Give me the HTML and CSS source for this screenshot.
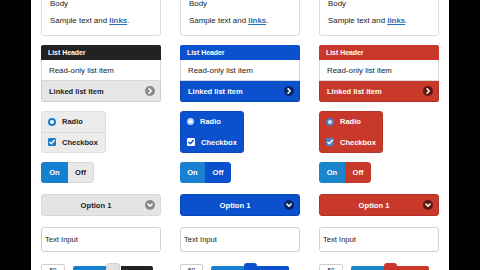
FILE: index.html
```html
<!DOCTYPE html>
<html>
<head>
<meta charset="utf-8">
<link rel="stylesheet" href="styles.css">
</head>
<body>
<div class="screen">
  <div class="col grey">
    <div class="card"><p>Body</p><p>Sample text and <a href="#">links</a>.</p></div>
    <div class="list">
      <div class="list-header">List Header</div>
      <div class="list-item">Read-only list item</div>
      <div class="list-item linked"><span class="grow">Linked list item</span><svg class="circ" viewBox="0 0 10 10" width="10" height="10"><circle cx="5" cy="5" r="5"/><path d="M4.1 2.9 L6.2 5 L4.1 7.1"/></svg></div>
    </div>
    <div class="choices">
      <div class="choice"><span class="radio"></span>Radio</div>
      <div class="choice"><svg class="check" viewBox="0 0 8 8" width="8" height="8"><rect width="8" height="8" rx="1.2"/><path d="M1.8 4.2 L3.4 5.8 L6.3 2.3"/></svg>Checkbox</div>
    </div>
    <div class="toggle"><span class="on">On</span><span class="off">Off</span></div>
    <div class="select"><span class="grow">Option 1</span><svg class="circ" viewBox="0 0 10 10" width="10" height="10"><circle cx="5" cy="5" r="5"/><path d="M2.9 4 L5 6.1 L7.1 4"/></svg></div>
    <div class="input">Text Input</div>
    <div class="slider-row"><div class="num">50</div><div class="slider"><div class="fill"></div><div class="thumb"></div><div class="rest"></div></div></div>
  </div>
  <div class="col blue">
    <div class="card"><p>Body</p><p>Sample text and <a href="#">links</a>.</p></div>
    <div class="list">
      <div class="list-header">List Header</div>
      <div class="list-item">Read-only list item</div>
      <div class="list-item linked"><span class="grow">Linked list item</span><svg class="circ" viewBox="0 0 10 10" width="10" height="10"><circle cx="5" cy="5" r="5"/><path d="M4.1 2.9 L6.2 5 L4.1 7.1"/></svg></div>
    </div>
    <div class="choices">
      <div class="choice"><span class="radio"></span>Radio</div>
      <div class="choice"><svg class="check" viewBox="0 0 8 8" width="8" height="8"><rect width="8" height="8" rx="1.2"/><path d="M1.8 4.2 L3.4 5.8 L6.3 2.3"/></svg>Checkbox</div>
    </div>
    <div class="toggle"><span class="on">On</span><span class="off">Off</span></div>
    <div class="select"><span class="grow">Option 1</span><svg class="circ" viewBox="0 0 10 10" width="10" height="10"><circle cx="5" cy="5" r="5"/><path d="M2.9 4 L5 6.1 L7.1 4"/></svg></div>
    <div class="input">Text Input</div>
    <div class="slider-row"><div class="num">50</div><div class="slider"><div class="fill"></div><div class="thumb"></div><div class="rest"></div></div></div>
  </div>
  <div class="col red">
    <div class="card"><p>Body</p><p>Sample text and <a href="#">links</a>.</p></div>
    <div class="list">
      <div class="list-header">List Header</div>
      <div class="list-item">Read-only list item</div>
      <div class="list-item linked"><span class="grow">Linked list item</span><svg class="circ" viewBox="0 0 10 10" width="10" height="10"><circle cx="5" cy="5" r="5"/><path d="M4.1 2.9 L6.2 5 L4.1 7.1"/></svg></div>
    </div>
    <div class="choices">
      <div class="choice"><span class="radio"></span>Radio</div>
      <div class="choice"><svg class="check" viewBox="0 0 8 8" width="8" height="8"><rect width="8" height="8" rx="1.2"/><path d="M1.8 4.2 L3.4 5.8 L6.3 2.3"/></svg>Checkbox</div>
    </div>
    <div class="toggle"><span class="on">On</span><span class="off">Off</span></div>
    <div class="select"><span class="grow">Option 1</span><svg class="circ" viewBox="0 0 10 10" width="10" height="10"><circle cx="5" cy="5" r="5"/><path d="M2.9 4 L5 6.1 L7.1 4"/></svg></div>
    <div class="input">Text Input</div>
    <div class="slider-row"><div class="num">50</div><div class="slider"><div class="fill"></div><div class="thumb"></div><div class="rest"></div></div></div>
  </div>
</div>
</body>
</html>
```

FILE: styles.css
```css
html, body {
  margin: 0;
  padding: 0;
  background: #000;
}
body {
  width: 480px;
  height: 270px;
  overflow: hidden;
  font-family: "Liberation Sans", Arial, Helvetica, sans-serif;
  color: #222;
}
.screen {
  margin-left: 31px;
  width: 418px;
  height: 270px;
  background: #fff;
  display: flex;
  gap: 19px;
  padding: 0 10px;
  box-sizing: border-box;
  overflow: hidden;
}
.col {
  width: 120px;
  flex: none;
  display: flex;
  flex-direction: column;
  align-items: flex-start;
}
.col > * {
  flex-shrink: 0;
}
.card {
  width: 100%;
  box-sizing: border-box;
  border: 1px solid #dcdcdc;
  border-radius: 3px;
  margin-top: -14px;
  padding: 12px 8px 9px;
  font-size: 7.9px;
}
.card p {
  margin: 0;
  line-height: 10px;
}
.card p + p {
  margin-top: 7px;
}
.card a {
  color: #2b6db5;
  font-weight: bold;
  text-decoration: underline;
}
.list {
  width: 100%;
  margin-top: 9px;
  border-radius: 2px;
  overflow: hidden;
}
.list-header {
  height: 15px;
  line-height: 15px;
  padding: 0 7px;
  font-size: 6.9px;
  font-weight: bold;
  color: #fff;
  background: #222;
}
.list-item {
  height: 21px;
  box-sizing: border-box;
  border: 1px solid #d8d8d8;
  border-top: none;
  padding: 0 5px 0 7px;
  font-size: 7.9px;
  display: flex;
  align-items: center;
  background: #fff;
}
.list-item.linked {
  font-weight: bold;
  font-size: 7.5px;
  background: #e6e6e6;
  border-color: #cfcfcf;
  border-radius: 0 0 2px 2px;
}
.grow {
  flex: 1;
}
.circ circle {
  fill: #8a8a8a;
}
.circ path {
  fill: none;
  stroke: #fff;
  stroke-width: 1.5;
  stroke-linecap: round;
  stroke-linejoin: round;
}
.choices {
  margin-top: 9px;
  width: 65px;
  box-sizing: border-box;
  border: 1px solid #dedede;
  border-radius: 3px;
  background: #ececec;
  font-size: 7.5px;
  font-weight: bold;
}
.choice {
  height: 19.5px;
  display: flex;
  align-items: center;
  padding-left: 6px;
  gap: 6px;
}
.choice + .choice {
  border-top: 1px solid #dcdcdc;
}
.radio {
  width: 8px;
  height: 8px;
  box-sizing: border-box;
  border-radius: 50%;
  border: 2.5px solid #1a7bcb;
  background: #fff;
}
.check rect {
  fill: #1a7bcb;
}
.check path {
  fill: none;
  stroke: #fff;
  stroke-width: 1.4;
  stroke-linecap: round;
  stroke-linejoin: round;
}
.toggle {
  margin-top: 9px;
  height: 21px;
  display: flex;
  border-radius: 3px;
  overflow: hidden;
  font-size: 7.5px;
  font-weight: bold;
}
.toggle span {
  width: 26px;
  display: flex;
  align-items: center;
  justify-content: center;
}
.toggle .on {
  width: 27px;
  background: #1580cf;
  color: #fff;
}
.toggle .off {
  background: #e8e8e8;
  color: #222;
  border: 1px solid #dadada;
  border-left: none;
  border-radius: 0 3px 3px 0;
  box-sizing: border-box;
}
.select {
  margin-top: 11px;
  width: 100%;
  height: 22px;
  box-sizing: border-box;
  border: 1px solid #d8d8d8;
  border-radius: 3px;
  background: #e4e4e4;
  display: flex;
  align-items: center;
  padding: 0 5px 0 10px;
  font-size: 7.6px;
  font-weight: bold;
  text-align: center;
}
.select .circ {
  margin-left: 5px;
}
.input {
  margin-top: 11px;
  width: 100%;
  height: 25px;
  box-sizing: border-box;
  border: 1px solid #d2d2d2;
  border-radius: 3px;
  background: #fff;
  display: flex;
  align-items: center;
  padding-left: 3px;
  font-size: 7.6px;
}
.slider-row {
  margin-top: 12px;
  display: flex;
  align-items: flex-start;
  gap: 8px;
}
.num {
  width: 24px;
  height: 16px;
  box-sizing: border-box;
  border: 1px solid #cfcfcf;
  border-radius: 2px;
  font-size: 6.5px;
  text-align: center;
  line-height: 12px;
}
.slider {
  display: flex;
  align-items: flex-start;
}
.fill {
  width: 33px;
  height: 10px;
  margin-top: 2px;
  background: #1580cf;
  border-radius: 2px 0 0 2px;
}
.thumb {
  width: 14px;
  height: 14px;
  margin-top: -1px;
  border-radius: 3px 3px 0 0;
  background: #e2e2e2;
  border: 1px solid #d0d0d0;
  box-sizing: border-box;
}
.rest {
  width: 32px;
  height: 10px;
  margin-top: 2px;
  margin-left: 1px;
  background: #222;
  border-radius: 0 2px 2px 0;
}

/* blue theme */
.blue .list-header {
  background: #0b50cd;
}
.blue .list-item.linked {
  background: #0b50cd;
  border-color: #0a46b3;
  color: #fff;
}
.blue .circ circle {
  fill: #0a2566;
}
.blue .choices {
  width: 64px;
  background: #0b50cd;
  border-color: #0a48ba;
  color: #fff;
}
.blue .choice + .choice {
  border-top-color: #0b50cd;
}
.blue .radio {
  border: 2px solid #bcd3ff;
  background: #fff;
  width: 7px;
  height: 7px;
}
.blue .check rect {
  fill: #fff;
}
.blue .check path {
  stroke: #0b50cd;
}
.blue .toggle .on {
  width: 25px;
  background: #1a80d2;
}
.blue .toggle .off {
  background: #0b50cd;
  border: none;
  color: #fff;
}
.blue .select {
  background: #0b50cd;
  border-color: #0a48ba;
  color: #fff;
}
.blue .num {
  width: 23px;
}
.blue .fill {
  background: #1a80d2;
}
.blue .thumb {
  width: 13px;
  background: #0b50cd;
  border: none;
}
.blue .rest {
  margin-left: 0;
  background: #0b50cd;
}

/* red theme */
.red .list-header {
  background: #c8392c;
}
.red .list-item.linked {
  background: #c8392c;
  border-color: #b43226;
  color: #fff;
}
.red .circ circle {
  fill: #5e1610;
}
.red .choices {
  width: 64px;
  background: #c8392c;
  border-color: #b43226;
  color: #fff;
}
.red .choice + .choice {
  border-top-color: #c8392c;
}
.red .radio {
  border-color: #4c7dbd;
  background: #d9e6f5;
}
.red .check rect {
  fill: #4c7dbd;
}
.red .toggle .on {
  width: 26px;
  background: #1a84cc;
}
.red .toggle .off {
  background: #c8392c;
  border: none;
  color: #fff;
}
.red .select {
  background: #c8392c;
  border-color: #b43226;
  color: #fff;
}
.red .num {
  width: 24px;
}
.red .fill {
  background: #1a84cc;
}
.red .thumb {
  width: 13px;
  background: #c8392c;
  border: none;
}
.red .rest {
  margin-left: 0;
  background: #c8392c;
}
```
